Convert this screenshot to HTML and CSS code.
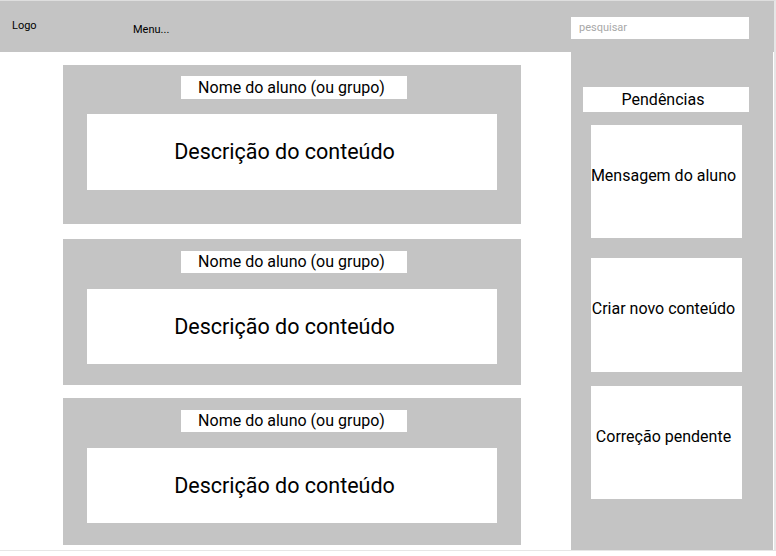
FILE: index.html
```html
<!DOCTYPE html>
<html lang="pt-BR">
<head>
<meta charset="utf-8">
<title>Painel</title>
<link rel="stylesheet" href="styles.css">
</head>
<body>
<div class="frame">
  <header class="header">
    <div class="logo">Logo</div>
    <div class="menu">Menu...</div>
    <input class="search" type="text" placeholder="pesquisar">
  </header>
  <div class="content">
    <main class="main">
      <section class="card card-1">
        <div class="name">Nome do aluno (ou grupo)</div>
        <div class="desc">Descrição do conteúdo</div>
      </section>
      <section class="card card-2">
        <div class="name">Nome do aluno (ou grupo)</div>
        <div class="desc">Descrição do conteúdo</div>
      </section>
      <section class="card card-3">
        <div class="name">Nome do aluno (ou grupo)</div>
        <div class="desc">Descrição do conteúdo</div>
      </section>
    </main>
    <aside class="sidebar">
      <div class="side-title">Pendências</div>
      <div class="side-card side-1">Mensagem do aluno</div>
      <div class="side-card side-2">Criar novo conteúdo</div>
      <div class="side-card side-3">Correção pendente</div>
    </aside>
  </div>
</div>
</body>
</html>
```

FILE: styles.css
```css
* { box-sizing: border-box; }
html, body { margin: 0; padding: 0; background: #ffffff; }
body {
  font-family: Roboto, "Liberation Sans", Arial, sans-serif;
  color: #000000;
}
.frame {
  width: 776px;
  border-top: 1px solid #dedede;
  border-right: 2px solid #e6e6e6;
  border-bottom: 1px solid #e6e6e6;
}
.header {
  height: 51px;
  background: #c4c4c4;
  display: flex;
  align-items: flex-start;
}
.logo {
  margin-left: 12px;
  margin-top: 18px;
  width: 121px;
  font-size: 11px;
  line-height: 13px;
}
.menu {
  margin-top: 22px;
  width: 438px;
  font-size: 11px;
  line-height: 13px;
}
.search {
  margin-top: 16px;
  width: 178px;
  height: 22px;
  border: none;
  outline: none;
  background: #ffffff;
  padding: 0 0 2px 8px;
  font-family: Roboto, "Liberation Sans", Arial, sans-serif;
  font-size: 11px;
  color: #000;
}
.search::placeholder { color: #a8a8a8; }
.content {
  display: flex;
  height: 498px;
}
.main {
  width: 571px;
  background: #ffffff;
  padding-top: 13px;
  display: flex;
  flex-direction: column;
}
.card {
  margin-left: 63px;
  width: 458px;
  background: #c4c4c4;
  padding-top: 11px;
  display: flex;
  flex-direction: column;
}
.card-1 { height: 159px; }
.card-2 { height: 146px; margin-top: 15px; padding-top: 12px; }
.card-3 { height: 147px; margin-top: 13px; padding-top: 12px; }
.name {
  margin-left: 118px;
  width: 226px;
  height: 23px;
  background: #ffffff;
  font-size: 16px;
  line-height: 23px;
  text-align: center;
  padding-right: 5px;
  white-space: nowrap;
}
.desc {
  margin-top: 15px;
  margin-left: 24px;
  width: 410px;
  height: 76px;
  background: #ffffff;
  font-size: 21.5px;
  display: flex;
  align-items: center;
  justify-content: center;
  padding-right: 15px;
  padding-bottom: 1px;
}
.card-2 .desc, .card-3 .desc { margin-top: 16px; height: 75px; }
.card-2 .name, .card-3 .name { height: 22px; line-height: 22px; }
.sidebar {
  width: 202px;
  background: #c4c4c4;
  padding-top: 35px;
  display: flex;
  flex-direction: column;
}
.side-title {
  margin-left: 12px;
  width: 166px;
  height: 25px;
  background: #ffffff;
  font-size: 16px;
  line-height: 25px;
  text-align: center;
  padding-right: 6px;
}
.side-card {
  margin-left: 20px;
  width: 151px;
  background: #ffffff;
  font-size: 16px;
  display: flex;
  align-items: center;
  justify-content: center;
  text-align: center;
  padding-bottom: 13px;
  padding-right: 6px;
  white-space: nowrap;
}
.side-1 { margin-top: 13px; height: 113px; }
.side-2 { margin-top: 20px; height: 114px; }
.side-3 { margin-top: 14px; height: 113px; }
```
